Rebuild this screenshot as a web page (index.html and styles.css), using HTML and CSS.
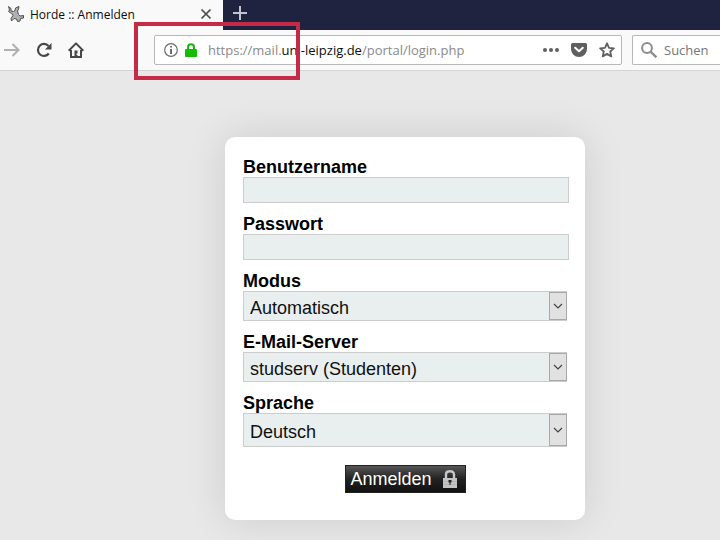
FILE: index.html
```html
<!DOCTYPE html>
<html lang="de">
<head>
    <meta charset="UTF-8">
    <meta name="viewport" content="width=device-width, initial-scale=1.0">
    <title>Horde :: Anmelden</title>
    <link rel="stylesheet" href="styles.css">
</head>
<body>
    <header class="browser">
        <div class="tabs">
            <div class="tab">
                <svg class="favicon" width="18" height="18" viewBox="0 0 18 18">
                    <path d="M1.500 1.500L4 3.500V6l2.500.5L8 5.500 8.500 3l3.500-1.500-.5 2.500L10.500 6l1 3.500L13 11l3.500-.5v2.500l-3 .5-.5 2.500-2.500.5-1-2.500-2.500-.5-2.500 2.500-.5-2.500L6 10.500 4.500 8.500 1.500 6.500l1-1.500z" fill="#b0b0b0" stroke="#4f4f4f" stroke-width="1"/>
                </svg>
                <span class="tab-title">Horde :: Anmelden</span>
                <button class="tab-close" aria-label="Tab schließen">
                    <svg width="12" height="12" viewBox="0 0 12 12"><path d="M1.500 1.500l9 9M10.500 1.500l-9 9" stroke="#4a4a4a" stroke-width="1.700"/></svg>
                </button>
            </div>
            <button class="tab-new" aria-label="Neuer Tab">
                <svg width="14" height="14" viewBox="0 0 14 14"><path d="M7 0v14M0 7h14" stroke="#c4c4d0" stroke-width="2"/></svg>
            </button>
        </div>
        <nav class="toolbar">
            <div class="nav-buttons">
                <button aria-label="Vor">
                    <svg width="16" height="16" viewBox="0 0 16 16" fill="none" stroke="#b0b0b0" stroke-width="2"><path d="M0 8h14.500M8.500 2l6 6-6 6"/></svg>
                </button>
                <button aria-label="Neu laden">
                    <svg width="16" height="16" viewBox="0 0 16 16" fill="none" stroke="#484848" stroke-width="2.200"><path d="M12.500 4A6 6 0 1 0 12.800 11.500"/><path d="M15.500 1v6.500H9z" fill="#484848" stroke="none"/></svg>
                </button>
                <button aria-label="Startseite">
                    <svg width="16" height="16" viewBox="0 0 16 16" fill="none" stroke="#484848" stroke-width="2"><path d="M.7 8.700L8 1.400l7.300 7.300" stroke-linejoin="round"/><path d="M3 8v7h10V8"/><path d="M6.500 8.500h3v3h-1V13h1v2h-3z" fill="#484848" stroke="none"/></svg>
                </button>
            </div>
            <div class="urlbar">
                <svg width="14" height="14" viewBox="0 0 14 14"><circle cx="7" cy="7" r="6.300" fill="none" stroke="#6b6b6b" stroke-width="1.200"/><path d="M6.200 3h1.700v1.600H6.200zM6.200 6h1.700v5H6.200z" fill="#555"/></svg>
                <svg class="secure" width="12" height="14" viewBox="0 0 12 14"><rect y="6" width="12" height="8" rx="1" fill="#12bc00"/><path d="M3 7V4.200a3 3 0 0 1 6 0V7" fill="none" stroke="#12bc00" stroke-width="2"/></svg>
                <div class="url">https://mail.<span class="domain">uni-leipzig.de</span>/portal/login.php</div>
                <div class="page-actions">
                    <button aria-label="Aktionen">
                        <svg width="16" height="16" viewBox="0 0 16 16" fill="#5f5f5f"><circle cx="2" cy="8" r="2"/><circle cx="8" cy="8" r="2"/><circle cx="14" cy="8" r="2"/></svg>
                    </button>
                    <button aria-label="Pocket">
                        <svg width="16" height="16" viewBox="0 0 16 16"><path d="M1.500 1h13A1.500 1.500 0 0 1 16 2.500V7A8 8 0 0 1 0 7V2.500A1.500 1.500 0 0 1 1.500 1z" fill="#5f5f5f"/><path d="M4.200 5.700L8 9.300l3.800-3.600" fill="none" stroke="#fff" stroke-width="2" stroke-linecap="round" stroke-linejoin="round"/></svg>
                    </button>
                    <button aria-label="Lesezeichen">
                        <svg width="16" height="16" viewBox="0 0 16 16"><path d="M8 1.300l2 4.500 4.900.5-3.700 3.200 1.100 4.900L8 11.900l-4.300 2.500 1.100-4.900L1.100 6.300l4.900-.5z" fill="none" stroke="#5f5f5f" stroke-width="1.800" stroke-linejoin="round"/></svg>
                    </button>
                </div>
            </div>
            <div class="search">
                <svg width="16" height="16" viewBox="0 0 16 16" fill="none" stroke="#8c8c8c" stroke-width="2"><circle cx="6" cy="6" r="4.900"/><path d="M9.500 9.500l5.800 5.800" stroke-width="2.400"/></svg>
                <input type="text" placeholder="Suchen" aria-label="Suchen">
            </div>
        </nav>
        <div class="highlight"></div>
    </header>

    <main class="page">
        <form class="login">
            <div class="field">
                <label for="user">Benutzername</label>
                <input type="text" id="user">
            </div>
            <div class="field">
                <label for="pass">Passwort</label>
                <input type="password" id="pass">
            </div>
            <div class="field">
                <label for="mode">Modus</label>
                <div class="select">
                    <select id="mode"><option>Automatisch</option></select>
                    <span class="arrow"><svg width="10" height="6" viewBox="0 0 10 6"><path d="M1 1l4 4 4-4" fill="none" stroke="#444" stroke-width="1.200"/></svg></span>
                </div>
            </div>
            <div class="field">
                <label for="server">E-Mail-Server</label>
                <div class="select">
                    <select id="server"><option>studserv (Studenten)</option></select>
                    <span class="arrow"><svg width="10" height="6" viewBox="0 0 10 6"><path d="M1 1l4 4 4-4" fill="none" stroke="#444" stroke-width="1.200"/></svg></span>
                </div>
            </div>
            <div class="field">
                <label for="lang">Sprache</label>
                <div class="select select-tall">
                    <select id="lang"><option>Deutsch</option></select>
                    <span class="arrow"><svg width="10" height="6" viewBox="0 0 10 6"><path d="M1 1l4 4 4-4" fill="none" stroke="#444" stroke-width="1.200"/></svg></span>
                </div>
            </div>
            <button class="submit" type="button">
                Anmelden
                <svg width="14" height="18" viewBox="0 0 14 18"><path d="M3 8V4.500Q3 1.300 7 1.300T11 4.500V8" fill="none" stroke="#c8c8c8" stroke-width="2.400"/><rect y="8" width="14" height="10" fill="#c4c4c4"/><path d="M0 11.500h14M0 14.500h14" stroke="#b4b4b4"/><path d="M5.500 10h3v2.500h-1V15h-1v-2.500h-1z" fill="#222"/></svg>
            </button>
        </form>
    </main>
</body>
</html>
```

FILE: styles.css
```css
* {
    box-sizing: border-box;
}
body {
    margin: 0;
    min-height: 100vh;
    display: flex;
    flex-direction: column;
    overflow-x: hidden;
    background-color: #e8e8e8;
    font-family: "Liberation Sans", Arial, sans-serif;
}
button {
    padding: 0;
    border: none;
    background: none;
    cursor: pointer;
}
svg {
    display: block;
    flex: none;
}

/* Browser chrome */
.browser {
    position: relative;
    font-family: "Open Sans", "Segoe UI", sans-serif;
}
.tabs {
    display: flex;
    height: 30px;
    background-color: #202340;
}
.tab {
    display: flex;
    align-items: center;
    width: 223px;
    padding: 0 11px 2px 7px;
    background-color: #f9f9fa;
}
.tab-title {
    flex: 1;
    margin-left: 5px;
    font-size: 12px;
    color: #0c0c0d;
    white-space: nowrap;
}
.tab-new {
    padding: 0 10px 4px;
}
.toolbar {
    display: flex;
    align-items: center;
    gap: 10px;
    height: 41px;
    padding-left: 4px;
    background-color: #f9f9fa;
    border-bottom: 1px solid #d4d4d4;
}
.nav-buttons {
    display: flex;
    gap: 16px;
    width: 140px;
}
.urlbar,
.search {
    display: flex;
    align-items: center;
    height: 30px;
    background-color: #fff;
    border: 1px solid #b8b8b8;
    border-radius: 2px;
    font-size: 13px;
}
.urlbar {
    flex: 1;
    padding: 0 6px 0 9px;
}
.secure {
    margin: 0 11px 0 7px;
}
.url {
    flex: 1;
    color: #8a8a8a;
    white-space: nowrap;
}
.domain {
    color: #0c0c0d;
}
.page-actions {
    display: flex;
    gap: 12px;
}
.search {
    width: 88px;
    padding-left: 8px;
    gap: 7px;
    border-right: none;
    border-radius: 2px 0 0 2px;
}
.search input {
    flex: 1;
    min-width: 0;
    padding: 0;
    border: none;
    background: none;
    font: inherit;
}
.search input::placeholder {
    color: #757575;
}
.highlight {
    position: absolute;
    top: 22px;
    left: 134px;
    width: 166px;
    height: 58px;
    border: 4px solid #c52a46;
    pointer-events: none;
}

/* Login page */
.page {
    display: flex;
    justify-content: center;
    align-items: flex-start;
    flex: 1;
    padding: 66px 0 20px 90px;
}
.login {
    display: flex;
    flex-direction: column;
    gap: 11px;
    width: 360px;
    padding: 20px 18px 27px;
    background-color: #fff;
    border-radius: 10px;
    box-shadow: 0 0 40px rgba(0, 0, 0, 0.12);
    font-size: 18px;
}
.field label {
    display: block;
    line-height: 20px;
    font-weight: bold;
    color: #000;
}
.field input,
.field select {
    display: block;
    width: 100%;
    height: 26px;
    padding: 0 6px;
    border: 1px solid #ccc;
    border-radius: 0;
    background-color: #e9eeee;
    font: inherit;
    color: #111;
}
.field input {
    width: calc(100% + 2px);
}
.select {
    position: relative;
}
.field select {
    appearance: none;
    height: 30px;
    padding-top: 3px;
}
.field .select-tall select {
    height: 34px;
}
.arrow {
    position: absolute;
    top: 1px;
    right: 0;
    bottom: 1px;
    width: 18px;
    display: flex;
    align-items: center;
    justify-content: center;
    border: 1px solid #a8a8a8;
    background-color: #e1e1e1;
    pointer-events: none;
}
.submit {
    display: flex;
    align-items: center;
    justify-content: space-between;
    align-self: center;
    width: 121px;
    height: 28px;
    margin-top: 7px;
    padding: 0 8px 0 5px;
    border: 1px solid #222;
    background: linear-gradient(#555, #222 50%, #111);
    font: inherit;
    color: #fff;
}
```
